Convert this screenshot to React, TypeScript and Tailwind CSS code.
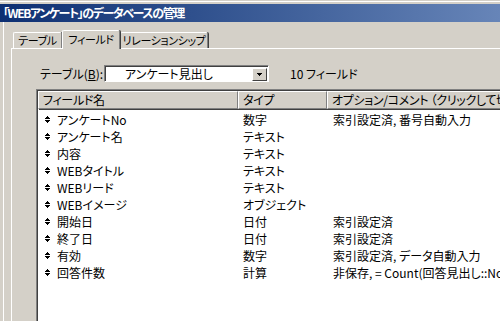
import React from 'react';

const font = "font-['MS_UI_Gothic','Noto_Sans_CJK_JP',sans-serif] [font-feature-settings:'palt']";

const rows: [string, string, string][] = [
  ['アンケートNo', '数字', '索引設定済, 番号自動入力'],
  ['アンケート名', 'テキスト', ''],
  ['内容', 'テキスト', ''],
  ['WEBタイトル', 'テキスト', ''],
  ['WEBリード', 'テキスト', ''],
  ['WEBイメージ', 'オブジェクト', ''],
  ['開始日', '日付', '索引設定済'],
  ['終了日', '日付', '索引設定済'],
  ['有効', '数字', '索引設定済, データ自動入力'],
  ['回答件数', '計算', '非保存, = Count(回答見出し::No)'],
];

const Handle: React.FC = () => (
  <svg width="5" height="7" viewBox="0 0 5 7" shapeRendering="crispEdges" className="shrink-0">
    <rect x="2" y="0" width="1" height="1" fill="#000" />
    <rect x="1" y="1" width="3" height="1" fill="#000" />
    <rect x="0" y="2" width="5" height="1" fill="#000" />
    <rect x="0" y="4" width="5" height="1" fill="#000" />
    <rect x="1" y="5" width="3" height="1" fill="#000" />
    <rect x="2" y="6" width="1" height="1" fill="#000" />
  </svg>
);

const Tab: React.FC<{ label: string; active?: boolean; w: string }> = ({ label, active, w }) => (
  <div
    className={`${w} ${
      active ? 'h-[19px] -mb-px z-10 pb-[2px]' : 'h-[16px]'
    } relative shrink-0 bg-[#d4d0c8] border-t border-l border-white border-r border-r-[#808080] shadow-[1px_0_0_#404040] rounded-t-[2px] flex items-center justify-center text-[11px] tracking-[-0.4px] text-black leading-none whitespace-nowrap`}
  >
    {label}
  </div>
);

const HeaderCell: React.FC<{ label: string; w?: string }> = ({ label, w }) => (
  <div
    className={`${w ?? 'flex-1'} h-[18px] shrink-0 bg-[#d4d0c8] border-t border-l border-white border-r border-r-[#808080] border-b border-b-[#808080] shadow-[1px_1px_0_#404040] flex items-center pl-[4px] text-[12px] tracking-[-0.3px] leading-none whitespace-nowrap overflow-hidden`}
  >
    {label}
  </div>
);

export default function App() {
  return (
    <div className={`w-[500px] h-[321px] overflow-hidden bg-[#d4d0c8] flex flex-col ${font}`}>
      <div className="pt-px h-[4px] shrink-0">
        <div className="h-px bg-white" />
      </div>
      <div className="h-[18px] shrink-0 bg-gradient-to-r from-[#0d2f72] to-[#6785b8] flex items-center pl-[3px] text-white text-[12px] tracking-[-1.4px] font-bold leading-none whitespace-nowrap">
        「WEBアンケート」のデータベースの管理
      </div>
      <div className="flex flex-1 min-h-0">
        <div className="w-[3px] shrink-0" />
        <div className="w-px bg-white shrink-0" />
        <div className="flex-1 flex flex-col pl-[7px] min-w-0">
          <div className="h-[26px] shrink-0 flex items-end pl-[2px]">
            <Tab label="テーブル" w="w-[49px]" />
            <Tab label="フィールド" w="w-[58px]" active />
            <Tab label="リレーションシップ" w="w-[88px]" />
          </div>
          <div className="flex-1 min-h-0 border-t border-l border-white flex flex-col">
            <div className="h-[16px] shrink-0" />
            <div className="flex items-center h-[17px] shrink-0 text-[12px] leading-none whitespace-nowrap">
              <span className="ml-[28px] w-[64px]">テーブル(<span className="underline">B</span>):</span>
              <div className="w-[165px] h-[17px] border-t border-l border-[#808080] border-r border-b border-r-white border-b-white">
                <div className="h-full border-t border-l border-[#404040] bg-white flex items-center">
                  <span className="pl-[19px] flex-1">アンケート見出し</span>
                  <div className="w-[15px] h-[13px] mr-px bg-[#d4d0c8] border-t border-l border-white border-r border-b border-r-[#404040] border-b-[#404040] flex items-center justify-center">
                    <svg width="5" height="3" viewBox="0 0 5 3" shapeRendering="crispEdges">
                      <polygon points="0,0 5,0 2.5,3" fill="#000" />
                    </svg>
                  </div>
                </div>
              </div>
              <span className="ml-[21px]">10 フィールド</span>
            </div>
            <div className="h-[7px] shrink-0" />
            <div className="ml-[24px] flex-1 min-h-0 border-t border-l border-[#808080]">
              <div className="h-full border-t border-l border-[#404040] bg-white flex flex-col overflow-hidden">
                <div className="flex shrink-0">
                  <HeaderCell label="フィールド名" w="w-[200px]" />
                  <HeaderCell label="タイプ" w="w-[89px]" />
                  <HeaderCell label="オプション/コメント （クリックして切り替え）" w="w-[200px]" />
                </div>
                <div className="pt-[2px] text-[12px] leading-none">
                  {rows.map(([name, type, opt]) => (
                    <div key={name} className="flex h-[17px] items-center whitespace-nowrap">
                      <div className="w-[200px] shrink-0 flex items-center pl-[7px] gap-[7px]">
                        <Handle />
                        <span>{name}</span>
                      </div>
                      <div className="w-[89px] shrink-0 pl-[5px]">{type}</div>
                      <div className="pl-[6px]">{opt}</div>
                    </div>
                  ))}
                </div>
              </div>
            </div>
          </div>
        </div>
      </div>
    </div>
  );
}
